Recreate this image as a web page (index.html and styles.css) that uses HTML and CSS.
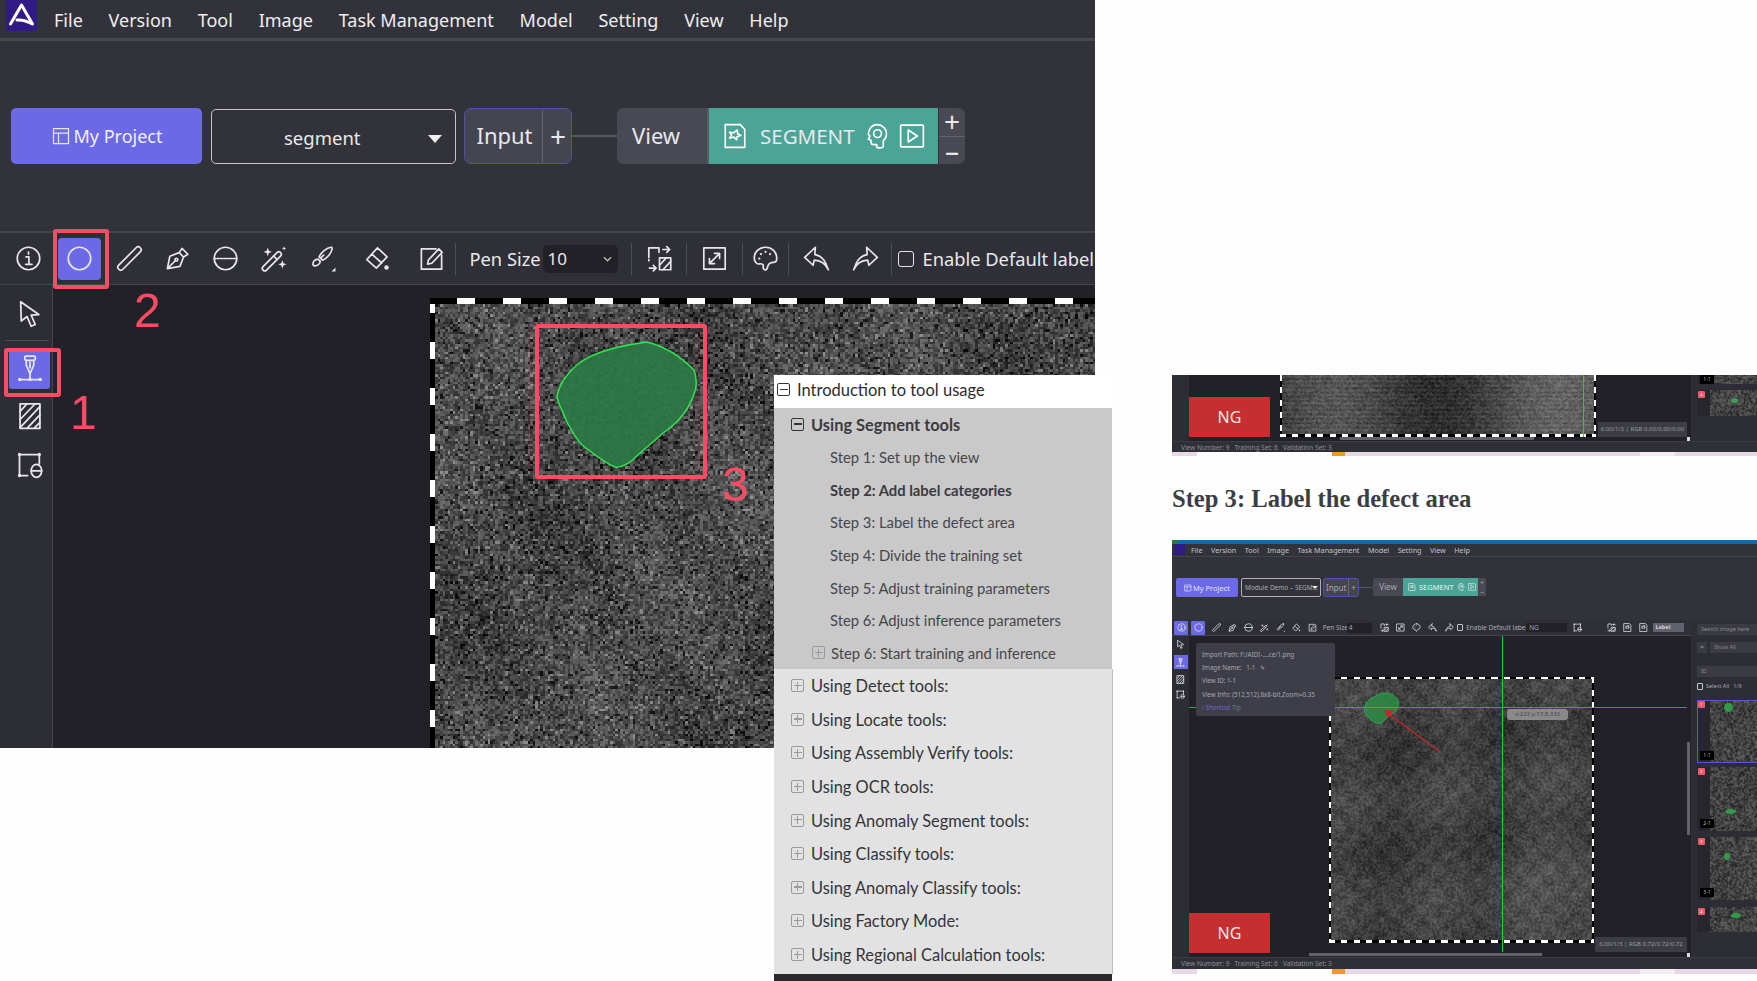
FILE: index.html
```html
<!DOCTYPE html>
<html lang="en">
<head>
<meta charset="utf-8">
<title>Segment tools</title>
<link rel="stylesheet" href="styles.css">
</head>
<body>
<svg class="defs" xmlns="http://www.w3.org/2000/svg">
  <symbol id="i-info" viewBox="0 0 24 24"><circle cx="12" cy="12" r="10"/><path d="M12 6.300v1.600M9.800 10.600h2.600V17M9.500 17.200h5.600"/></symbol>
  <symbol id="i-circle" viewBox="0 0 24 24"><circle cx="12" cy="12" r="10"/></symbol>
  <symbol id="i-line" viewBox="0 0 24 24"><rect x="9.400" y="-1.500" width="5.200" height="27" rx="2.600" transform="rotate(45 12 12)"/></symbol>
  <symbol id="i-pen" viewBox="0 0 24 24"><path d="M3 21 5.200 10 13.500 6.800 17.400 10.700 14.200 19ZM3 21l7-7M13.500 6.800 16 3l5.200 5.200-3.800 2.500"/><circle cx="11" cy="13" r="1.200"/></symbol>
  <symbol id="i-dot" viewBox="0 0 24 24"><circle cx="12" cy="12" r="10"/><path d="M2 12h20" stroke-dasharray="1.500 1.300"/></symbol>
  <symbol id="i-wand" viewBox="0 0 24 24"><rect x="7.400" y="3.500" width="4.400" height="22" rx="2.200" transform="rotate(45 9.600 14.500)"/><path d="M11.200 9.800l3 3"/><path class="solid" d="M6 2.500l1 2.700 2.700 1-2.700 1-1 2.700-1-2.700-2.700-1 2.700-1zM19 13.500l1 2.700 2.700 1-2.700 1-1 2.700-1-2.700-2.700-1 2.700-1zM20.500 1l.5 1.500 1.500.5-1.500.5-.5 1.500-.5-1.500-1.500-.5 1.500-.5z"/></symbol>
  <symbol id="i-brush" viewBox="0 0 24 24"><path d="M19.500 2c-3.500.5-8.500 4-10.500 8.500l3 3c4.500-2 8-6.500 8.500-10 .2-1-.5-1.700-1-1.500zM8 12.500c-2.500.2-4.500 2-4.500 4.300 0 1 .7 1.700 1.700 1.700 2.600 0 4.500-1.900 4.800-4zM11 11l2-2"/><path class="solid" d="M23.500 23.500h-3.400l3.400-3.400z"/></symbol>
  <symbol id="i-eraser" viewBox="0 0 24 24"><path d="M2.500 13 12 2.500l8.500 8L11 20.500ZM7 8.200l8.800 7.800"/><circle class="solid" cx="20" cy="20" r="2"/></symbol>
  <symbol id="i-edit" viewBox="0 0 24 24"><path d="M21 9v12.500H3V3.500h13"/><path d="M8.500 17l.8-3.800L18.500 3.500l3 3-9.200 9.700z"/></symbol>
  <symbol id="i-swap" viewBox="0 0 24 24"><path d="M2.500 11V2.500h9v4M2.500 14v-1M15 4h6l-2.500-2.500M21 4l-2.500 2.500M3 20.500h6L6.500 18M9 20.500 6.500 23"/><rect x="12" y="11.500" width="10" height="10.500"/><path d="M12 18l6-6.500M15 22l7-7.500"/></symbol>
  <symbol id="i-expand" viewBox="0 0 24 24"><rect x="2.500" y="2.500" width="19" height="19"/><path d="M7.500 16.500l9-9M12 7.500h4.500V12M7.500 12v4.500H12"/></symbol>
  <symbol id="i-palette" viewBox="0 0 24 24"><path d="M12 2C6.200 2 2 6.400 2 11.500c0 3.800 2.700 5.800 4.700 5.300 2-.5 3.800.5 3.300 2.500-.4 1.800 1 3.200 2.500 2.700 1-.3 1-1.500 1.500-3 .6-2 2.500-3.500 5-3.500 1.700 0 3-1.200 3-3.500C22 6 17.800 2 12 2z"/><circle class="solid" cx="8" cy="8" r="1"/><circle class="solid" cx="12" cy="6" r="1"/><circle class="solid" cx="16" cy="8" r="1"/><circle class="solid" cx="6.500" cy="12" r="1"/></symbol>
  <symbol id="i-undo" viewBox="0 0 24 24"><path d="M11 2 1.500 11 9 18l1-4.500c5 .2 10 3 12.500 8.500-2-5.500-4-12-12-13.500z"/></symbol>
  <symbol id="i-redo" viewBox="0 0 24 24"><path d="M13 2l9.500 9L15 18l-1-4.500c-5 .2-10 3-12.500 8.500 2-5.500 4-12 12-13.500z"/></symbol>
  <symbol id="i-proj" viewBox="0 0 24 24"><rect x="3" y="3" width="18" height="18"/><path d="M3 8.500h18M9 8.500V21"/></symbol>
  <symbol id="i-file" viewBox="0 0 24 24"><path d="M3 1.500h14l4 4.500v16.500H3z"/><path d="M14 6.500l.5 3.500 3 1.500-3.500 1-.5 3-2.500-2.500-4 1 2-3-2-2.500 3.700.5z"/></symbol>
  <symbol id="i-head" viewBox="0 0 24 24"><path d="M12 1.500c5 0 8.800 3.800 8.800 8.500 0 2.800-1.300 5-3 6.500v5.500c-1.500 1-4.500 1-6 .5v-2.500H9c-1.500 0-2.500-1-2.500-2.500V16l-2.500-1 1.500-3-1.500-1.500C4 5.500 7.500 1.500 12 1.500z"/><circle cx="12.500" cy="9.800" r="3.600"/></symbol>
  <symbol id="i-play" viewBox="0 0 24 24"><rect x="1.500" y="2" width="21" height="20" rx="1"/><path d="M8.500 6.500v11L17 12z"/></symbol>
  <symbol id="i-cursor" viewBox="0 0 24 24"><path d="M4 1.500 4.500 18l5-3.800 3.500 8.300 3.500-1.500-3.500-8 6.500-.5z"/></symbol>
  <symbol id="i-node" viewBox="0 0 24 24"><rect x="7.500" y="1" width="9" height="3.500" rx="1"/><path d="M8.800 4.500v4.300L12 16l3.200-7.200V4.500M12 6v5M12 16v5M3 21h18"/><circle class="solid" cx="3.200" cy="21" r="1.500"/><circle class="solid" cx="12" cy="21" r="1.500"/><circle class="solid" cx="20.800" cy="21" r="1.500"/></symbol>
  <symbol id="i-hatch" viewBox="0 0 24 24"><rect x="3.500" y="1.500" width="17" height="21"/><path d="M3.500 8l6-6.500M3.500 15l13-13.500M3.500 22l17-18M10 22l10.500-11M16 22l4.500-4.500"/></symbol>
  <symbol id="i-rbox" viewBox="0 0 24 24"><path d="M3 3h17M3 3v18h7M20 3v8"/><circle class="solid" cx="3" cy="3" r="1.400"/><circle class="solid" cx="20" cy="3" r="1.400"/><circle class="solid" cx="3" cy="21" r="1.400"/><ellipse cx="17.500" cy="17" rx="4.500" ry="5.500"/><path d="M13 17h9"/></symbol>
</svg>

<main class="desk">
  <!-- main application window -->
  <section class="app">
    <header class="menu">
      <span class="logo"><svg viewBox="0 0 31 31"><path d="M4.500 24 15.500 5 26.500 24C21 21 15 19.500 11 20" /></svg></span>
      <nav class="menu-items"><span>File</span><span>Version</span><span>Tool</span><span>Image</span><span>Task Management</span><span>Model</span><span>Setting</span><span>View</span><span>Help</span></nav>
    </header>
    <div class="top">
      <button class="my"><svg class="ic ic-my"><use href="#i-proj"/></svg>My Project</button>
      <div class="sel"><span>segment</span><i class="caret"></i></div>
      <div class="input"><span class="input-t">Input</span><span class="input-p">+</span></div>
      <i class="wire"></i>
      <div class="flow">
        <span class="flow-v">View</span>
        <span class="flow-s"><svg class="ic ic-s1"><use href="#i-file"/></svg><b>SEGMENT</b><svg class="ic ic-s2"><use href="#i-head"/></svg><svg class="ic ic-s3"><use href="#i-play"/></svg></span>
        <span class="flow-z"><i>+</i><i>–</i></span>
      </div>
    </div>
    <div class="tools">
      <span class="t t-info"><svg class="ic"><use href="#i-info"/></svg></span>
      <span class="t t-circle"><span class="t-active"><svg class="ic"><use href="#i-circle"/></svg></span></span>
      <span class="t"><svg class="ic"><use href="#i-line"/></svg></span>
      <span class="t"><svg class="ic"><use href="#i-pen"/></svg></span>
      <span class="t"><svg class="ic"><use href="#i-dot"/></svg></span>
      <span class="t"><svg class="ic"><use href="#i-wand"/></svg></span>
      <span class="t"><svg class="ic"><use href="#i-brush"/></svg></span>
      <span class="t t-er"><svg class="ic"><use href="#i-eraser"/></svg></span>
      <span class="t t-ed"><svg class="ic"><use href="#i-edit"/></svg></span>
      <i class="sep"></i>
      <span class="pen-l">Pen Size</span>
      <span class="pen-s"><span>10</span><svg class="chev" viewBox="0 0 10 6"><path d="M1 1l4 4 4-4"/></svg></span>
      <i class="sep sep-a"></i>
      <span class="t t-54"><svg class="ic"><use href="#i-swap"/></svg></span>
      <i class="sep"></i>
      <span class="t t-55"><svg class="ic"><use href="#i-expand"/></svg></span>
      <i class="sep"></i>
      <span class="t t-45"><svg class="ic"><use href="#i-palette"/></svg></span>
      <i class="sep"></i>
      <span class="t t-54"><svg class="ic"><use href="#i-undo"/></svg></span>
      <span class="t t-44"><svg class="ic"><use href="#i-redo"/></svg></span>
      <span class="t-gap"></span>
      <i class="sep"></i>
      <i class="chk"></i>
      <span class="en">Enable Default label</span>
    </div>
    <div class="work">
      <aside class="side">
        <span class="s-btn"><svg class="ic"><use href="#i-cursor"/></svg></span>
        <i class="s-sep"></i>
        <span class="s-btn s-act"><svg class="ic"><use href="#i-node"/></svg></span>
        <span class="s-btn"><svg class="ic"><use href="#i-hatch"/></svg></span>
        <span class="s-btn"><svg class="ic"><use href="#i-rbox"/></svg></span>
      </aside>
      <div class="view">
        <div class="main-img"><canvas class="noise n-main" width="264" height="178" data-seed="7" data-kind="main"></canvas></div>
      </div>
    </div>
    <svg class="blob" viewBox="0 0 1095 748"><path d="M646 342C665 346 680 356 694 370 697 378 697 388 694 394 688 412 675 425 663 433 655 441 645 448 638 455 630 463 622 468 615 467 607 464 595 455 582 445 574 436 570 428 567 422 562 410 558 403 557 397 558 388 565 375 577 365 585 358 600 352 611 349 625 345 635 344 646 342Z"/></svg>
    <i class="mark m1"></i><i class="mark m2"></i><i class="mark m3"></i>
    <span class="num n1">1</span><span class="num n2">2</span><span class="num n3">3</span>
  </section>

  <!-- table of contents -->
  <aside class="tree">
    <div class="row r-top"><i class="box"></i>Introduction to tool usage</div>
    <div class="grp">
      <div class="row r-g strong"><i class="box"></i>Using Segment tools</div>
      <div class="row r-s">Step 1: Set up the view</div>
      <div class="row r-s strong">Step 2: Add label categories</div>
      <div class="row r-s">Step 3: Label the defect area</div>
      <div class="row r-s">Step 4: Divide the training set</div>
      <div class="row r-s">Step 5: Adjust training parameters</div>
      <div class="row r-s">Step 6: Adjust inference parameters</div>
      <div class="row r-s r-x"><i class="box plus"></i>Step 6: Start training and inference</div>
    </div>
    <div class="list">
      <div class="row r-l"><i class="box plus"></i>Using Detect tools:</div>
      <div class="row r-l"><i class="box plus"></i>Using Locate tools:</div>
      <div class="row r-l"><i class="box plus"></i>Using Assembly Verify tools:</div>
      <div class="row r-l"><i class="box plus"></i>Using OCR tools:</div>
      <div class="row r-l"><i class="box plus"></i>Using Anomaly Segment tools:</div>
      <div class="row r-l"><i class="box plus"></i>Using Classify tools:</div>
      <div class="row r-l"><i class="box plus"></i>Using Anomaly Classify tools:</div>
      <div class="row r-l"><i class="box plus"></i>Using Factory Mode:</div>
      <div class="row r-l"><i class="box plus"></i>Using Regional Calculation tools:</div>
    </div>
    <div class="tree-end"></div>
  </aside>

  <!-- article column -->
  <article class="doc">
    <div class="shot shot-a">
      <div class="ws ws-a">
        <div class="ws-side"></div>
        <div class="ws-area">
          <div class="ng ng-a">NG</div>
          <div class="pic pic-a"><canvas class="noise n-a" width="210" height="42" data-seed="11" data-kind="band"></canvas></div>
          <i class="gv gv-a"></i>
          <div class="dim dim-a">6.00/1/3 | RGB 0.00/0.00/0.00</div>
          <i class="hs hs-a"></i>
          <i class="corner"></i>
        </div>
        <div class="ws-panel">
          <div class="th th-a0"><canvas class="noise n-t" width="32" height="10" data-seed="3" data-kind="thumb"></canvas><span class="lb lb-a">1-1</span></div>
          <div class="th th-a1"><i class="bd">4</i><canvas class="noise n-t" width="32" height="17" data-seed="4" data-kind="thumb"></canvas><i class="sp sp-a1"></i></div>
        </div>
      </div>
      <div class="stat">View Number: 9 &nbsp; Training Set: 6 &nbsp; Validation Set: 3</div>
    </div>
    <div class="strip strip-a"></div>
    <h2 class="h3">Step 3: Label the defect area</h2>
    <div class="shot shot-b">
      <div class="blue"></div>
      <div class="b-menu"><i class="b-logo"></i><span>File</span><span>Version</span><span>Tool</span><span>Image</span><span>Task Management</span><span>Model</span><span>Setting</span><span>View</span><span>Help</span></div>
      <div class="b-top">
        <span class="b-my"><svg class="ic b-i"><use href="#i-proj"/></svg>My Project</span>
        <span class="b-sel">Module Demo – SEGM… <i class="caret b-car"></i></span>
        <span class="b-inp"><span>Input</span><span>+</span></span>
        <i class="b-wire"></i>
        <span class="b-flow"><span class="b-v">View</span><span class="b-seg"><svg class="ic b-i"><use href="#i-file"/></svg>SEGMENT<svg class="ic b-i"><use href="#i-head"/></svg><svg class="ic b-i"><use href="#i-play"/></svg></span><span class="b-z"><i>+</i><i>–</i></span></span>
      </div>
      <div class="b-tools">
        <span class="b-t b-on"><svg class="ic"><use href="#i-info"/></svg></span>
        <span class="b-t b-on"><svg class="ic"><use href="#i-circle"/></svg></span>
        <span class="b-t"><svg class="ic"><use href="#i-line"/></svg></span>
        <span class="b-t"><svg class="ic"><use href="#i-pen"/></svg></span>
        <span class="b-t"><svg class="ic"><use href="#i-dot"/></svg></span>
        <span class="b-t"><svg class="ic"><use href="#i-wand"/></svg></span>
        <span class="b-t"><svg class="ic"><use href="#i-brush"/></svg></span>
        <span class="b-t"><svg class="ic"><use href="#i-eraser"/></svg></span>
        <span class="b-t"><svg class="ic"><use href="#i-edit"/></svg></span>
        <span class="b-pen">Pen Size</span>
        <span class="b-ps">4</span>
        <span class="b-t b-m1"><svg class="ic"><use href="#i-swap"/></svg></span>
        <span class="b-t"><svg class="ic"><use href="#i-expand"/></svg></span>
        <span class="b-t"><svg class="ic"><use href="#i-palette"/></svg></span>
        <span class="b-t"><svg class="ic"><use href="#i-undo"/></svg></span>
        <span class="b-t"><svg class="ic"><use href="#i-redo"/></svg></span>
        <i class="b-chk"></i>
        <span class="b-en">Enable Default label</span>
        <span class="b-ng">NG</span>
        <span class="b-t b-m2"><svg class="ic"><use href="#i-rbox"/></svg></span>
        <span class="b-t b-m3"><svg class="ic"><use href="#i-swap"/></svg></span>
        <span class="b-t"><svg class="ic"><use href="#i-file"/></svg></span>
        <span class="b-t"><svg class="ic"><use href="#i-file"/></svg></span>
        <span class="b-lab">Label</span>
      </div>
      <div class="ws ws-b">
        <div class="ws-side b-side">
          <svg class="ic"><use href="#i-cursor"/></svg>
          <span class="b-sact"><svg class="ic"><use href="#i-node"/></svg></span>
          <svg class="ic"><use href="#i-hatch"/></svg>
          <svg class="ic"><use href="#i-rbox"/></svg>
        </div>
        <div class="ws-area">
          <div class="ng ng-b">NG</div>
          <div class="pic pic-b"><canvas class="noise n-b" width="176" height="176" data-seed="21" data-kind="fabric"></canvas></div>
          <svg class="b-blob" viewBox="0 0 48 40"><path d="M20 3C24 1 34 1 38 6 41 9 42 12 42 14 41 20 38 24 30 28 27 31 25 35 21 37 15 36 10 33 8 30 4 27 3 24 3 22 3 17 4 15 5 13 8 9 14 6 20 3Z"/></svg>
          <svg class="b-arrow" viewBox="0 0 60 45"><path d="M56 42 6 5"/><path class="solid" d="M0 0 10 1 4 8Z"/></svg>
          <i class="gv gv-b"></i><i class="gh"></i>
          <div class="tag">x:223 y:17.8.333</div>
          <div class="tip">
            <p>Import Path: F:/AIDI-….ce/1.png</p>
            <p>Image Name: &nbsp; 1-1 &nbsp; ✎</p>
            <p>View ID: 1-1</p>
            <p>View Info: (512,512),8x8-bit,Zoom=0.35</p>
            <p class="tip-l">› Shortcut Tip</p>
          </div>
          <div class="dim dim-b">6.00/1/3 | RGB 0.72/0.72/0.72</div>
          <i class="hs hs-b"></i>
          <i class="vs"></i>
          <i class="corner"></i>
        </div>
        <div class="ws-panel p-b">
          <div class="inp">Search image here</div>
          <div class="p-row"><span class="p-eq">=</span><span class="inp p-show">Show All</span></div>
          <div class="inp p-id">ID</div>
          <div class="p-all"><i class="b-chk"></i>Select All &nbsp; 1/9</div>
          <div class="th t-1 t-sel"><i class="bd">1</i><canvas class="noise n-t" width="32" height="42" data-seed="31" data-kind="thumb"></canvas><span class="lb">1-1</span><i class="sp sp-1"></i></div>
          <div class="th t-2"><i class="bd">2</i><canvas class="noise n-t" width="32" height="42" data-seed="32" data-kind="thumb"></canvas><span class="lb">2-1</span><i class="sp sp-2"></i></div>
          <div class="th t-3"><i class="bd">3</i><canvas class="noise n-t" width="32" height="42" data-seed="33" data-kind="thumb"></canvas><span class="lb">3-1</span><i class="sp sp-3"></i></div>
          <div class="th t-4"><i class="bd">4</i><canvas class="noise n-t" width="32" height="17" data-seed="34" data-kind="thumb"></canvas><i class="sp sp-4"></i></div>
        </div>
      </div>
      <div class="stat">View Number: 9 &nbsp; Training Set: 6 &nbsp; Validation Set: 3</div>
    </div>
    <div class="strip strip-b"></div>
  </article>
</main>
<script src="script.js"></script>
</body>
</html>
```
FILE: styles.css
```css
* { box-sizing: border-box; }
html, body { margin: 0; padding: 0; }
body { width: 1757px; height: 981px; overflow: hidden; background: #fdfdfd; font-family: "Noto Sans", sans-serif; color: #e8e8ee; }
.defs { position: absolute; width: 0; height: 0; }
.desk { position: relative; width: 1757px; height: 981px; overflow: hidden; }
i { font-style: normal; display: block; }
.ic { display: block; width: 27px; height: 27px; fill: none; stroke: #e6e6ec; stroke-width: 1.500; stroke-linejoin: round; stroke-linecap: round; overflow: visible; }
.solid { fill: #e6e6ec; stroke: none; }

/* main window */
.app { position: absolute; left: 0; top: 0; width: 1095px; height: 748px; background: #32333a; overflow: hidden; display: flex; flex-direction: column; }
.menu { display: flex; height: 41px; border-bottom: 3px solid #47484e; flex: none; }
.logo { width: 31px; height: 31px; margin-left: 6px; background: #2f1a86; flex: none; }
.logo svg { display: block; width: 31px; height: 31px; fill: none; stroke: #fff; stroke-width: 3; stroke-linejoin: round; stroke-linecap: round; }
.menu-items { display: flex; margin-left: 17px; gap: 25.800px; font-size: 18px; line-height: 40px; color: #eeeef2; }
.top { flex: none; height: 190px; display: flex; align-items: flex-start; padding: 67px 0 0 11px; }
.my { width: 191px; height: 56px; border: 0; border-radius: 5px; background: #6b69e6; color: #f0f0ff; font: 18px "Noto Sans", sans-serif; display: flex; align-items: center; justify-content: center; padding: 0; gap: 3px; }
.ic-my { width: 20px; height: 20px; }
.sel { width: 245px; height: 55px; margin: 1px 0 0 9px; border: 1.500px solid #c4c4c9; border-radius: 5px; position: relative; font-size: 18.500px; display: flex; align-items: center; padding: 2px 0 0 72px; }
.caret { position: absolute; right: 13px; top: 25px; width: 0; height: 0; border-left: 7.500px solid transparent; border-right: 7.500px solid transparent; border-top: 8px solid #f0f0f0; }
.input { width: 108px; height: 56px; margin-left: 8px; border: 1.500px solid #5350a8; border-radius: 7px; background: #44454f; display: flex; align-items: center; }
.input-t { width: 78px; font-size: 22px; text-align: center; border-right: 1px solid #65666f; line-height: 51px; height: 53px; padding-left: 2px; }
.input-p { flex: 1; text-align: center; font-size: 28px; line-height: 50px; padding-left: 2px; }
.wire { width: 45px; height: 2px; background: #55565e; margin-top: 27px; }
.flow { display: flex; height: 56px; }
.flow-v { width: 92px; background: #484953; border-radius: 6px 0 0 6px; font-size: 22px; line-height: 54px; padding-left: 15px; border-right: 2px solid #5a5b64; }
.flow-s { width: 229px; background: #4ba596; display: flex; align-items: center; padding-left: 13px; }
.flow-s b { font-weight: 400; font-size: 20.500px; margin: 0 9px 0 12px; }
.ic-s1, .ic-s2, .ic-s3 { width: 26px; height: 26px; stroke: #fff; }
.ic-s3 { margin-left: 9px; }
.flow-z { width: 26px; background: #484953; border-radius: 0 6px 6px 0; display: flex; flex-direction: column; margin-left: 1px; }
.flow-z i { flex: 1; text-align: center; font-size: 28px; line-height: 26px; }
.flow-z i:first-child { border-bottom: 1px solid #62636c; }
.tools { flex: none; height: 54px; border-top: 2px solid #45464d; border-bottom: 1px solid #45464d; display: flex; align-items: center; padding-left: 4px; background: #2f3037; white-space: nowrap; }
.t { flex: none; width: 48.300px; display: flex; justify-content: center; align-items: center; }
.t-info { width: 49px; }
.t-circle { width: 52px; }
.t-er { width: 62px; }
.t-ed { width: 47px; }
.t-54 { width: 54px; }
.t-55 { width: 55px; }
.t-45 { width: 45px; }
.t-44 { width: 44px; }
.t-gap { width: 4px; flex: none; }
.t-active { width: 43px; height: 42px; background: #6b69e6; border-radius: 4px; display: flex; align-items: center; justify-content: center; }
.sep { flex: none; width: 1px; height: 32px; background: #4d4e55; }
.sep-a { margin-left: 13px; }
.pen-l { font-size: 18.300px; margin-left: 13px; width: 74px; flex: none; }
.pen-s { flex: none; width: 75px; height: 28px; background: #212127; border-radius: 5px; font-size: 17px; padding-left: 4px; display: flex; align-items: center; justify-content: space-between; padding-right: 6px; }
.chev { width: 9px; height: 6px; fill: none; stroke: #bbb; stroke-width: 1.500; }
.chk { flex: none; width: 16px; height: 16px; border: 1.500px solid #e6e6ec; border-radius: 3px; margin-left: 6px; }
.en { font-size: 18.300px; margin-left: 8px; }
.work { flex: 1; display: flex; min-height: 0; }
.side { width: 53px; flex: none; background: #2d2e35; border-right: 1px solid #44454c; padding: 8px 0 0 9px; }
.s-btn { display: flex; width: 41px; height: 41px; align-items: center; justify-content: center; margin-right: 0; }
.s-btn .ic { width: 28px; height: 28px; }
.s-sep { width: 44px; height: 1px; background: #4c4d54; margin: 6px 0 7px -4px; }
.s-act { background: #6b69e6; border-radius: 3px; margin-bottom: 6px; }
.s-act + .s-btn { margin-bottom: 8px; }
.view { flex: 1; background: #212127; padding: 13px 0 0 377px; min-width: 0; }
.main-img { width: 665px; height: 451px; padding: 6px 0 0 5px; background:
  repeating-linear-gradient(90deg, #000 0 27px, #fff 27px 45px, #000 45px 46px) top left / 100% 6px no-repeat,
  repeating-linear-gradient(180deg, #fff 0 15px, #000 15px 44px, #fff 44px 46px) top left / 5px 100% no-repeat; }
.noise { display: block; }
.n-main { width: 660px; height: 445px; image-rendering: pixelated; }
.blob { position: absolute; left: 0; top: 0; width: 1095px; height: 748px; fill: rgba(45, 120, 68, .92); stroke: #2ee651; stroke-width: 1.500; stroke-linejoin: round; }
.mark { position: absolute; border: 4px solid #fb4c66; border-radius: 3px; }
.m1 { left: 4px; top: 348px; width: 57px; height: 49px; }
.m2 { left: 53px; top: 229px; width: 56px; height: 60px; }
.m3 { left: 535px; top: 324px; width: 172px; height: 155px; }
.num { position: absolute; font: 48px/50px "Liberation Sans Narrow", "Liberation Sans", sans-serif; color: #fb4c66; }
.n1 { left: 70px; top: 388px; }
.n2 { left: 134px; top: 286px; }
.n3 { left: 722px; top: 460px; }

/* tree */
.tree { position: absolute; left: 774px; top: 375px; width: 339px; height: 606px; background: #fff; font-family: Lato, sans-serif; display: flex; flex-direction: column; color: #33343a; }
.row { display: flex; align-items: center; white-space: nowrap; }
.r-top { height: 33px; font-size: 16.500px; padding: 0 0 4px 3px; color: #2b2c33; }
.r-top .box { margin-right: 7px; }
.grp { height: 261px; background: #c9c9c9; display: flex; flex-direction: column; width: 338px; }
.r-g { height: 33px; font-size: 16.400px; padding-left: 17px; }
.r-g .box { margin-right: 7px; }
.r-s { height: 32.600px; font-size: 14.800px; padding-left: 56px; color: #45464c; }
.strong { font-weight: 700; color: #3a3b41; }
.r-x { padding-left: 38px; }
.r-x .box { margin-right: 6px; }
.list { height: 305px; background: #e2e2e2; border-right: 1px solid #bdbdbd; display: flex; flex-direction: column; }
.r-l { height: 33.600px; font-size: 16.400px; padding-left: 17px; }
.r-l .box { margin-right: 7px; }
.box { flex: none; width: 13px; height: 13px; border: 1.200px solid #33343a; border-radius: 2px; position: relative; }
.box::before { content: ""; position: absolute; left: 1.500px; right: 1.500px; top: 4.500px; height: 1.200px; background: #33343a; }
.box.plus { border-color: #9a9a9a; }
.box.plus::before { background: #9a9a9a; }
.box.plus::after { content: ""; position: absolute; top: 1.500px; bottom: 1.500px; left: 4.500px; width: 1.200px; background: #9a9a9a; }
.tree-end { flex: 1; background: #2b2b2e; width: 338px; }

/* document */
.doc { position: absolute; left: 1172px; top: 375px; width: 585px; height: 606px; overflow: hidden; }
.h3 { margin: 0; height: 84px; padding-top: 2px; display: flex; align-items: center; font: 700 24.600px "Liberation Serif", serif; color: #3b3f45; }
.strip { background: linear-gradient(90deg, #e6d8e4 0 25px, #fdfdfd 25px 160px, #f09a20 160px 173px, #e6d8e4 173px 80%, #f3ecf3 80% 86%, #e6d8e4 86%); }
.strip-a { height: 4px; }
.strip-b { height: 5px; }
.shot { width: 585px; background: #2f3037; color: #a8a8b0; filter: blur(.35px); overflow: hidden; }
.shot-a { height: 77px; display: flex; flex-direction: column; }
.shot-b { height: 429px; display: flex; flex-direction: column; }
.ws { display: flex; flex: none; }
.ws-a { height: 66px; }
.ws-b { height: 321px; }
.ws-side { width: 17px; flex: none; background: #2d2e35; }
.ws-area { width: 502px; flex: none; background: #212127; position: relative; overflow: hidden; }
.ws-panel { flex: 1; background: #2d2e35; margin-left: 0; padding-left: 6px; overflow: hidden; }
.stat { flex: none; height: 12px; font-size: 6.500px; line-height: 12px; padding-left: 9px; background: #2f3037; border-top: 1px solid #3c3d44; white-space: nowrap; color: #8e8e96; }
.ng { position: absolute; left: 0; width: 81px; height: 40px; background: #c52f2f; color: #f4e8e8; font-size: 16px; line-height: 40px; text-align: center; }
.ng-a { top: 22px; }
.ng-b { top: 277px; }
.pic { position: absolute; background:
  repeating-linear-gradient(90deg, #fff 0 6px, #000 6px 12.500px) top left / 100% 2px no-repeat,
  repeating-linear-gradient(90deg, #fff 0 6px, #000 6px 12.500px) bottom left / 100% 3px no-repeat,
  repeating-linear-gradient(180deg, #fff 0 6px, #000 6px 12.500px) top left / 2px 100% no-repeat,
  repeating-linear-gradient(180deg, #fff 0 6px, #000 6px 12.500px) top right / 2px 100% no-repeat; padding: 2px 2px 3px; }
.pic-a { left: 91px; top: 0; width: 316px; height: 62px; padding-top: 0; }
.n-a { width: 312px; height: 59px; }
.pic-b { left: 140px; top: 41px; width: 265px; height: 266px; }
.n-b { width: 261px; height: 261px; }
.gv { position: absolute; width: 1px; background: #1fd42f; }
.gv-a { left: 394px; top: 0; height: 62px; }
.gv-b { left: 313px; top: 0; height: 316px; }
.gh { position: absolute; left: 0; top: 71px; width: 498px; height: 1px; background: #1fd42f; opacity: .8; }
.dim { position: absolute; background: #3c3d44; font-size: 6px; text-align: center; white-space: nowrap; color: #9a9aa2; }
.dim-a { left: 409px; top: 47px; width: 89px; height: 15px; line-height: 15px; }
.dim-b { left: 406px; top: 301px; width: 92px; height: 15px; line-height: 15px; }
.hs { position: absolute; height: 3px; background: #62626e; }
.hs-a { left: 151px; width: 194px; top: 62px; }
.hs-b { left: 120px; width: 233px; top: 317px; }
.vs { position: absolute; left: 498px; top: 106px; width: 3px; height: 93px; background: #62626e; }
.corner { position: absolute; right: 1px; bottom: 0; width: 3px; height: 4px; background: #ddd; }
.blue { height: 4px; flex: none; background: linear-gradient(90deg, #2a7a3f 0 6px, #0a6cb5 6px); }
.b-menu { flex: none; height: 13px; display: flex; align-items: center; gap: 8.500px; font-size: 7.200px; padding-left: 19px; border-bottom: 1px solid #44454c; background: #32333a; position: relative; color: #c4c4cc; }
.b-logo { position: absolute; left: 2px; top: 0; width: 11px; height: 11px; background: #2f1a86; }
.b-top { flex: none; height: 63px; background: #32333a; display: flex; padding: 21px 0 0 4px; align-items: flex-start; font-size: 7.500px; white-space: nowrap; }
.b-my { width: 62px; height: 19px; background: #6b69e6; border-radius: 2px; display: flex; align-items: center; justify-content: center; gap: 1px; color: #e4e4f4; }
.ic.b-i { width: 8px; height: 8px; stroke-width: 2; }
.b-sel { width: 80px; height: 19px; margin-left: 3px; border: 1px solid #b0b0b6; border-radius: 2px; line-height: 17px; padding-left: 3px; position: relative; font-size: 6.500px; overflow: hidden; }
.b-car { right: 2px; top: 7px; border-left-width: 3px; border-right-width: 3px; border-top-width: 3px; }
.b-inp { width: 36px; height: 19px; margin-left: 2px; border: 1px solid #5350a8; border-radius: 3px; background: #44454f; display: flex; line-height: 17px; font-size: 8px; }
.b-inp span { width: 26px; text-align: center; border-right: 1px solid #65666f; }
.b-inp span + span { width: 9px; border: 0; }
.b-wire { width: 14px; height: 1px; background: #55565e; margin-top: 9px; }
.b-flow { display: flex; height: 18px; line-height: 18px; }
.b-v { width: 30px; background: #484953; text-align: center; border-radius: 2px 0 0 2px; font-size: 8px; }
.b-seg { width: 75px; background: #4ba596; display: flex; align-items: center; gap: 3px; padding-left: 5px; color: #e8f4f2; }
.b-z { width: 8px; background: #484953; display: flex; flex-direction: column; font-size: 7px; line-height: 9px; text-align: center; }
.b-tools { flex: none; height: 16px; background: #2f3037; border-bottom: 1px solid #45464d; display: flex; align-items: center; padding-left: 2px; font-size: 6.500px; white-space: nowrap; }
.b-t { flex: none; width: 16.100px; height: 14px; display: flex; align-items: center; justify-content: center; }
.b-t .ic { width: 9px; height: 9px; stroke-width: 2; }
.b-on { width: 14px; background: #6b69e6; border-radius: 1px; margin-right: 3px; }
.b-pen { width: 24px; margin-left: 2px; flex: none; overflow: hidden; }
.b-ps { width: 25px; flex: none; background: #212127; height: 10px; line-height: 10px; padding-left: 2px; }
.b-m1 { margin-left: 5px; }
.b-chk { flex: none; width: 6px; height: 7px; border: 1px solid #c4c4cc; border-radius: 1px; }
.b-en { width: 60px; margin-left: 3px; flex: none; overflow: hidden; }
.b-ng { width: 41px; flex: none; background: #212127; height: 9px; line-height: 9px; padding-left: 3px; }
.b-m2 { margin-left: 2px; }
.b-m3 { margin-left: 18px; }
.b-lab { width: 31px; flex: none; height: 9px; background: #62626e; line-height: 9px; padding-left: 3px; margin-left: 1px; color: #d4d4dc; font-weight: 700; font-size: 5.500px; }
.b-side { display: flex; flex-direction: column; align-items: center; gap: 6px; padding-top: 4px; }
.b-side .ic { width: 9px; height: 9px; stroke-width: 2; }
.b-sact { width: 14px; height: 14px; background: #6b69e6; display: flex; align-items: center; justify-content: center; }
.b-blob { position: absolute; left: 173px; top: 54px; width: 42px; height: 38px; fill: rgba(44, 140, 70, .85); stroke: #2fb04a; stroke-width: 1; }
.b-arrow { position: absolute; left: 195px; top: 74px; width: 60px; height: 45px; fill: none; stroke: #c8252a; stroke-width: 1.200px; overflow: visible; }
.b-arrow .solid { fill: #c8252a; }
.tag { position: absolute; left: 318px; top: 73px; width: 61px; height: 11px; background: #8a8a8a; border-radius: 3px; font-size: 6px; line-height: 11px; text-align: center; color: #44454c; white-space: nowrap; }
.tip { position: absolute; left: 7px; top: 7px; width: 139px; height: 73px; background: #3d3e48; border-radius: 2px; padding: 5px 0 0 6px; font-size: 6.200px; white-space: nowrap; }
.tip p { margin: 0; height: 13.200px; line-height: 13.200px; }
.tip-l { color: #6d6bd8; }
.p-b { padding-top: 0; margin-top: -12px; position: relative; }
.inp { height: 11px; width: 84px; background: #3a3b43; font-size: 5.500px; line-height: 11px; padding-left: 4px; color: #8a8a92; white-space: nowrap; }
.p-row { display: flex; gap: 3px; margin-top: 7px; }
.p-eq { width: 10px; height: 11px; background: #3a3b43; font-size: 6px; line-height: 11px; text-align: center; }
.p-show { flex: 1; }
.p-id { margin-top: 13px; }
.p-all { display: flex; align-items: center; gap: 3px; height: 10px; margin-top: 4px; font-size: 5.500px; }
.th { position: relative; width: 70px; background: #26262c; padding-left: 13px; overflow: hidden; }
.th .n-t { width: 47px; }
.t-1 { height: 63px; margin-top: 9px; }
.t-sel { outline: 1px solid #5a57c9; outline-offset: -1px; }
.t-2 { height: 64px; margin-top: 4px; }
.t-3 { height: 63px; margin-top: 6px; }
.t-4 { height: 25px; margin-top: 7px; }
.n-t { height: 100%; }
.th-a0 { height: 9px; margin-bottom: 6px; }
.th-a1 { height: 26px; }
.bd { position: absolute; left: 1px; top: 1px; width: 7px; height: 7px; background: #ee5a6a; border-radius: 1px; font-size: 4px; line-height: 7px; text-align: center; color: #fff; z-index: 1; }
.lb { position: absolute; left: 3px; bottom: 3px; width: 14px; height: 9px; background: #000; font-size: 5px; line-height: 9px; text-align: center; color: #bbb; }
.lb-a { bottom: 0; }
.sp { position: absolute; background: #2f9a48; border-radius: 50%; }
.sp-1 { left: 27px; top: 3px; width: 9px; height: 9px; }
.sp-2 { left: 28px; top: 42px; width: 11px; height: 5px; }
.sp-3 { left: 27px; top: 16px; width: 6px; height: 7px; }
.sp-4 { left: 34px; top: 6px; width: 10px; height: 5px; }
.sp-a1 { left: 34px; top: 8px; width: 7px; height: 5px; background: #3da05a; }
```
FILE: script.js
```js
(function () {
  function rng(a) {
    return function () {
      a = (a + 0x6d2b79f5) | 0;
      var t = Math.imul(a ^ (a >>> 15), 1 | a);
      t = (t + Math.imul(t ^ (t >>> 7), 61 | t)) ^ t;
      return ((t ^ (t >>> 14)) >>> 0) / 4294967296;
    };
  }
  var kinds = {
    main: function (x, y, r) {
      var m = 72 + 7 * Math.sin(x / 23 + y / 31) + 6 * Math.sin(x / 9 - y / 13);
      var d = Math.hypot(x - 140, y - 125);
      if (d < 16) { m -= 14 * (1 - d / 16); }
      var n = r();
      return m + (n - 0.5) * 72 + (n > 0.96 ? 25 : 0) - (n < 0.06 ? 22 : 0);
    },
    fabric: function (x, y, r) {
      var d = (x + y) / 176, e = (x - y) / 176;
      var m = 64 + 12 * Math.sin(d * 9) * Math.cos(e * 7) + 24 * Math.max(0, d - 1.2) + 8 * Math.sin(x / 3) * Math.sin(y / 3);
      return m + (r() - 0.5) * 46;
    },
    band: function (x, y, r) {
      var m = 66 + 20 * Math.sin(x / 22) + 28 * Math.max(0, (x - 150) / 60);
      return m + (r() - 0.5) * 44 + 10 * Math.sin(y * 2);
    },
    thumb: function (x, y, r) {
      return 66 + (r() - 0.5) * 70;
    }
  };
  var list = document.querySelectorAll('canvas.noise');
  for (var i = 0; i < list.length; i++) {
    var c = list[i], w = c.width, h = c.height;
    var f = kinds[c.getAttribute('data-kind')];
    var r = rng(parseInt(c.getAttribute('data-seed'), 10));
    var ctx = c.getContext('2d');
    var img = ctx.createImageData(w, h);
    for (var y = 0; y < h; y++) {
      for (var x = 0; x < w; x++) {
        var v = Math.max(10, Math.min(235, f(x, y, r)));
        var p = (y * w + x) * 4;
        img.data[p] = img.data[p + 1] = img.data[p + 2] = v;
        img.data[p + 3] = 255;
      }
    }
    ctx.putImageData(img, 0, 0);
  }
})();
```
